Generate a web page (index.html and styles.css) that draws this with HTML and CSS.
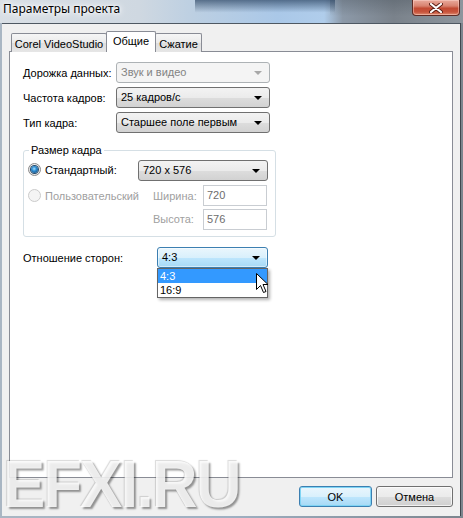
FILE: index.html
```html
<!DOCTYPE html>
<html lang="ru">
<head>
<meta charset="utf-8">
<title>Параметры проекта</title>
<link rel="stylesheet" href="styles.css">
</head>
<body>
<div class="window">
  <div class="titlebar">
    <span class="title">Параметры проекта</span>
    <div class="close">
      <svg width="14" height="10" viewBox="0 0 14 10">
        <path d="M2 1 L12 9 M12 1 L2 9" stroke="#5a1d14" stroke-width="4" stroke-linecap="round"/>
        <path d="M2 1 L12 9 M12 1 L2 9" stroke="#ffffff" stroke-width="2.2" stroke-linecap="round"/>
      </svg>
    </div>
  </div>
  <div class="client">
    <div class="tabs">
      <div class="tab tab-corel">Corel VideoStudio</div>
      <div class="tab tab-general active">Общие</div>
      <div class="tab tab-compress">Сжатие</div>
    </div>
    <div class="panel">
      <div class="form-rows">
        <div class="row">
          <span class="lbl">Дорожка данных:</span>
          <div class="combo disabled">Звук и видео<i class="arrow"></i></div>
        </div>
        <div class="row">
          <span class="lbl">Частота кадров:</span>
          <div class="combo">25 кадров/с<i class="arrow"></i></div>
        </div>
        <div class="row">
          <span class="lbl">Тип кадра:</span>
          <div class="combo">Старшее поле первым<i class="arrow"></i></div>
        </div>
      </div>
      <fieldset class="group">
        <legend>Размер кадра</legend>
        <div class="group-grid">
          <span class="radio-item"><span class="radio checked"></span>Стандартный:</span>
          <div class="combo size-combo">720 x 576<i class="arrow"></i></div>
          <span class="radio-item disabled"><span class="radio"></span>Пользовательский</span>
          <span class="dim-label">Ширина:</span>
          <div class="input">720</div>
          <span class="dim-label third">Высота:</span>
          <div class="input third">576</div>
        </div>
      </fieldset>
      <div class="aspect-row">
        <span class="aspect-lbl">Отношение сторон:</span>
        <div class="combo-wrap">
          <div class="combo focused">4:3<i class="arrow"></i></div>
          <ul class="dropdown">
            <li class="hl">4:3</li>
            <li>16:9</li>
          </ul>
          <svg class="cursor" width="13" height="21" viewBox="0 0 13 21">
            <path d="M0.5 0.5 L0.5 16.5 L4.5 12.5 L7.5 19.5 L10 18.5 L7 11.5 L12 11.5 Z" fill="#ffffff" stroke="#000000" stroke-width="1" stroke-linejoin="miter"/>
          </svg>
        </div>
      </div>
    </div>
    <div class="footer">
      <button class="btn default">OK</button>
      <button class="btn">Отмена</button>
    </div>
  </div>
  <div class="watermark">EFXI.RU</div>
</div>
</body>
</html>
```

FILE: styles.css
```css
* { box-sizing: border-box; }
html, body { margin: 0; padding: 0; }
body {
  font-family: "Liberation Sans", Arial, sans-serif;
  font-size: 11px;
  color: #000;
  background: #7b8794;
}
.window {
  position: relative;
  width: 463px;
  height: 518px;
  display: flex;
  flex-direction: column;
  overflow: hidden;
  background: linear-gradient(90deg, #a9b6c3 0%, #9fb0c2 50%, #7c858e 100%);
}
.titlebar {
  height: 23px;
  flex: none;
  display: flex;
  align-items: flex-start;
  padding-left: 3px;
  background:
    linear-gradient(180deg, rgba(45,70,100,0.7) 0%, rgba(45,70,100,0) 55%) 195px 0 / 140px 100% no-repeat,
    linear-gradient(180deg, rgba(70,80,90,0.35) 0%, rgba(70,80,90,0) 70%) 330px 0 / 90px 100% no-repeat,
    linear-gradient(90deg, #d9dfe5 0%, #cfd8e1 30%, #bccfe2 42%, #aac8e8 60%, #b0cdeb 70%, #8c99a8 74%, #7a828b 85%, #8d959d 100%);
}
.title {
  font-family: "Noto Sans", "Liberation Sans", sans-serif;
  font-size: 12px;
  line-height: 16px;
  margin-top: 1px;
  color: #000;
  text-shadow: 0 0 6px #fff, 0 0 10px #fff, 0 0 3px #fff;
}
.close {
  margin-left: auto;
  margin-right: 3px;
  width: 48px;
  height: 16px;
  border: 1px solid #5e2b25;
  border-top: none;
  border-radius: 0 0 4px 4px;
  background: linear-gradient(180deg, #e9aa9c 0%, #d8826f 40%, #c24a33 55%, #c8543c 80%, #de8d72 100%);
  box-shadow: inset 0 0 0 1px rgba(255,220,210,0.45);
  display: flex;
  align-items: center;
  justify-content: center;
}
.client {
  flex: 1;
  margin: 0 3px 2px 2px;
  background: #f0f0f0;
  border-top: 1px solid #4e5862;
  display: flex;
  flex-direction: column;
  padding: 7px 7px 0 7px;
  box-shadow: 1px 0 0 #3f474f;
}
.tabs {
  display: flex;
  align-items: flex-end;
  height: 21px;
  padding-left: 2px;
  margin-bottom: -1px;
  position: relative;
  z-index: 1;
}
.tab {
  height: 19px;
  border: 1px solid #898c95;
  border-bottom: none;
  background: linear-gradient(180deg, #f6f6f6 0%, #ebebeb 50%, #dedede 51%, #e6e6e6 100%);
  padding: 4px 0 0 0;
  text-align: center;
  white-space: nowrap;
  border-radius: 2px 2px 0 0;
}
.tab-corel { width: 96px; margin-right: -1px; }
.tab-general { width: 50px; }
.tab-compress { width: 47px; margin-left: -1px; }
.tab.active {
  height: 21px;
  background: #ffffff;
  padding-top: 3px;
  position: relative;
  z-index: 2;
}
.panel {
  flex: 1;
  background: #ffffff;
  border: 1px solid #898c95;
  padding: 10px 0 0 13px;
}
.form-rows {
  display: flex;
  flex-direction: column;
  gap: 4px;
}
.row {
  display: flex;
  align-items: center;
  height: 21px;
}
.lbl {
  width: 93px;
  flex: none;
}
.combo {
  position: relative;
  width: 154px;
  height: 21px;
  border: 1px solid #707070;
  border-radius: 3px;
  background: linear-gradient(180deg, #f3f3f3 0%, #ebebeb 50%, #dddddd 51%, #d2d2d2 100%);
  padding: 3px 0 0 4px;
  line-height: 13px;
  white-space: nowrap;
}
.combo .arrow {
  position: absolute;
  right: 7px;
  top: 8px;
  width: 0;
  height: 0;
  border-left: 4px solid transparent;
  border-right: 4px solid transparent;
  border-top: 4px solid #000;
}
.combo.disabled {
  border-color: #adb2b5;
  background: #f4f4f4;
  color: #838383;
}
.combo.disabled .arrow { border-top-color: #a8a8a8; }
.group {
  margin: 11px 0 0 0;
  width: 253px;
  border: 1px solid #d5dfe5;
  border-radius: 3px;
  padding: 3px 0 6px 4px;
}
.group legend {
  padding: 0 2px;
  margin-left: 1px;
  line-height: 13px;
}
.group-grid {
  display: grid;
  grid-template-columns: 110px 15px 50px 66px;
  grid-template-rows: 25px 24px 21px;
  align-items: start;
}
.radio-item {
  display: flex;
  align-items: center;
  gap: 4px;
  margin-top: 3px;
  white-space: nowrap;
}
.radio-item.disabled {
  grid-column: 1 / 3;
  color: #a0a0a0;
  margin-top: 4px;
}
.radio {
  width: 13px;
  height: 13px;
  border-radius: 50%;
  border: 1px solid #8a8a8a;
  background: radial-gradient(circle at 50% 40%, #ffffff 0%, #e6e6e6 70%, #cfcfcf 100%);
  display: flex;
  align-items: center;
  justify-content: center;
  flex: none;
}
.radio.checked::after {
  content: "";
  width: 7px;
  height: 7px;
  border-radius: 50%;
  background: radial-gradient(circle at 45% 40%, #a6e0ff 0%, #2a8ad0 40%, #103f6c 100%);
  box-shadow: 0 0 0 1px #24496a;
}
.radio-item.disabled .radio {
  border-color: #cbcbcb;
  background: #f4f4f4;
}
.size-combo {
  grid-column: 2 / 5;
  width: 130px;
}
.dim-label {
  grid-column: 3;
  color: #a0a0a0;
  margin-top: 5px;
}
.dim-label.third { grid-row: 3; margin-top: 4px; }
.input {
  grid-column: 4;
  width: 64px;
  height: 21px;
  border: 1px solid #c9cdd2;
  background: #fff;
  color: #6d6d6d;
  padding: 3px 0 0 3px;
  line-height: 13px;
}
.input.third { grid-row: 3; }
.aspect-row {
  display: flex;
  align-items: center;
  margin-top: 10px;
  height: 21px;
}
.aspect-lbl {
  width: 134px;
  flex: none;
}
.combo-wrap {
  position: relative;
}
.combo.focused {
  width: 111px;
  border-color: #3c7fb1;
  background: linear-gradient(180deg, #eaf6fd 0%, #d9f0fc 50%, #bee6fd 51%, #a7d9f5 100%);
  box-shadow: inset 0 0 0 1px rgba(255,255,255,0.5);
}
.dropdown {
  position: absolute;
  left: 0;
  top: 21px;
  width: 111px;
  margin: 0;
  padding: 0;
  list-style: none;
  background: #fff;
  border: 1px solid #646464;
  box-shadow: 2px 2px 3px rgba(0,0,0,0.3);
}
.dropdown li {
  height: 14px;
  line-height: 14px;
  padding-left: 2px;
}
.dropdown li.hl {
  background: #3399ff;
  color: #fff;
}
.cursor {
  position: absolute;
  left: 99px;
  top: 26px;
}
.footer {
  flex: none;
  display: flex;
  justify-content: flex-end;
  gap: 4px;
  padding: 8px 0 9px 0;
}
.btn {
  font-family: "Liberation Sans", Arial, sans-serif;
  font-size: 11px;
  height: 21px;
  border: 1px solid #707070;
  border-radius: 3px;
  background: linear-gradient(180deg, #f2f2f2 0%, #ebebeb 50%, #dddddd 51%, #cfcfcf 100%);
  box-shadow: inset 0 0 0 1px rgba(255,255,255,0.7);
  padding: 0;
  color: #000;
}
.btn.default {
  width: 73px;
  border-color: #3c7fb1;
  background: linear-gradient(180deg, #eaf6fd 0%, #d9f0fc 50%, #bee6fd 51%, #a7d9f5 100%);
  box-shadow: inset 0 0 0 1px #7fd4f4;
}
.btn:not(.default) { width: 77px; }
.watermark {
  position: absolute;
  left: 3px;
  top: 451px;
  font-family: "Liberation Sans", Arial, sans-serif;
  font-weight: bold;
  font-size: 66px;
  line-height: 66px;
  letter-spacing: -2px;
  transform: scaleX(0.96);
  transform-origin: left center;
  color: rgba(255,255,255,0.85);
  text-shadow: 2px 2px 2px rgba(0,0,0,0.4), -1px -1px 1px rgba(0,0,0,0.15);
}
```
